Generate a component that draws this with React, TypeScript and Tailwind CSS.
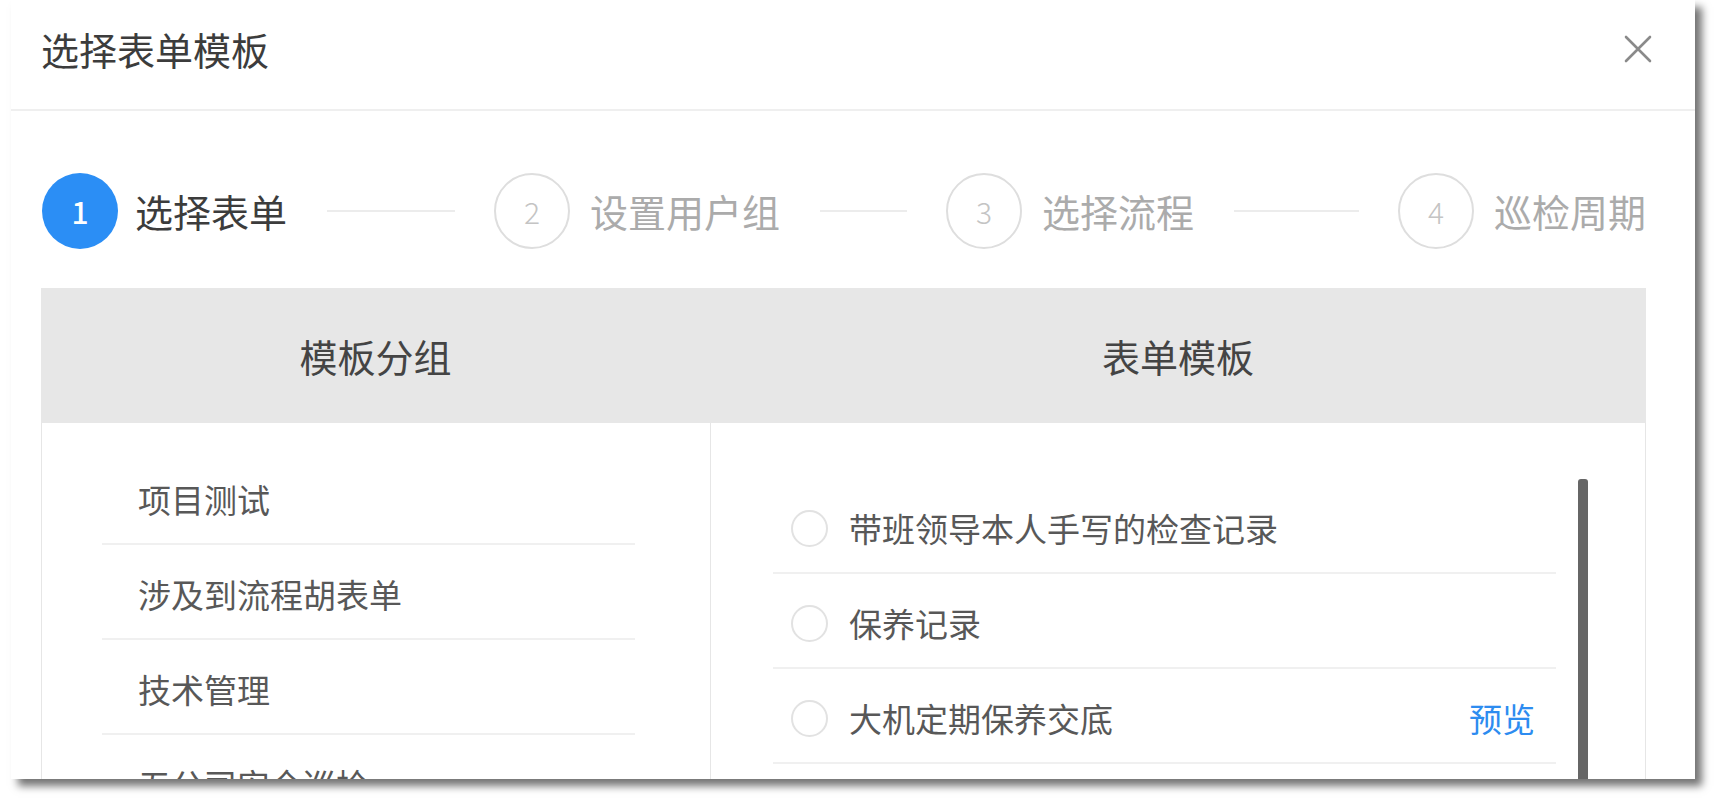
import React from "react";

const steps = [
  { n: "1", label: "选择表单", active: true },
  { n: "2", label: "设置用户组", active: false },
  { n: "3", label: "选择流程", active: false },
  { n: "4", label: "巡检周期", active: false },
];

const groups = ["项目测试", "涉及到流程胡表单", "技术管理", "五公司安全巡检"];
const forms = [
  { name: "带班领导本人手写的检查记录", preview: false },
  { name: "保养记录", preview: false },
  { name: "大机定期保养交底", preview: true },
];

export default function App() {
  return (
    <div className="w-[1721px] h-[808px] bg-white overflow-hidden font-['Noto_Sans_CJK_SC','Noto_Sans',sans-serif]">
      <div className="ml-[11px] w-[1684px] h-[779px] bg-white shadow-[7px_7px_8px_rgba(0,0,0,0.55)] overflow-hidden flex flex-col">
        {/* header */}
        <div className="h-[111px] shrink-0 border-b-2 border-[#efefef] flex items-center justify-between pl-[30px] pr-[42px] pb-[12px]">
          <div className="text-[38px] leading-none text-[#3c3c3c]">选择表单模板</div>
          <svg width="30" height="30" viewBox="0 0 30 30" className="shrink-0">
            <path d="M3 3 L27 27 M27 3 L3 27" stroke="#8a8a8a" strokeWidth="2.6" strokeLinecap="round" />
          </svg>
        </div>

        {/* steps */}
        <div className="mt-[62px] ml-[31px] w-[1604px] flex items-center shrink-0">
          {steps.map((s, i) => {
            const last = i === steps.length - 1;
            return (
              <div key={s.n} className={last ? "flex-none flex items-center" : "flex-1 flex items-center"}>
                {s.active ? (
                  <div className="w-[76px] h-[76px] rounded-full bg-[#2b8ef5] flex items-center justify-center text-white text-[30px] leading-none font-medium shrink-0">
                    {s.n}
                  </div>
                ) : (
                  <div className="w-[76px] h-[76px] rounded-full border-2 border-[#dedede] flex items-center justify-center text-[#c4c4c4] text-[30px] leading-none font-light shrink-0">
                    {s.n}
                  </div>
                )}
                <div
                  className={
                    s.active
                      ? "ml-[17px] text-[38px] leading-none text-[#3c3c3c] whitespace-nowrap"
                      : "ml-[20px] text-[38px] leading-none text-[#ababab] whitespace-nowrap"
                  }
                >
                  {s.label}
                </div>
                {!last && <div className="flex-1 h-[2px] bg-[#ececec] ml-[40px] mr-[39px]" />}
              </div>
            );
          })}
        </div>

        {/* table */}
        <div className="mt-[39px] ml-[30px] w-[1605px] flex-1 flex flex-col min-h-0">
          <div className="h-[135px] shrink-0 bg-[#e7e7e7] grid grid-cols-[669px_1fr] items-center text-[38px] leading-none text-[#444]">
            <div className="text-center">模板分组</div>
            <div className="text-center">表单模板</div>
          </div>
          <div className="flex-1 min-h-0 grid grid-cols-[669px_1fr] border-x border-[#e6e6e6]">
            <div className="border-r border-[#e6e6e6] pt-[27px] overflow-hidden">
              <div className="ml-[60px] w-[533px]">
                {groups.map((g) => (
                  <div
                    key={g}
                    className="h-[95px] border-b-2 border-[#f0f0f0] flex items-center pl-[36px] pt-[5px] text-[33px] leading-none text-[#585858]"
                  >
                    {g}
                  </div>
                ))}
              </div>
            </div>
            <div className="pt-[56px] flex overflow-hidden">
              <div className="ml-[62px] w-[783px]">
                {forms.map((f) => (
                  <div key={f.name} className="h-[95px] border-b-2 border-[#f0f0f0] flex items-center pt-[5px]">
                    <div className="ml-[18px] w-[37px] h-[37px] rounded-full border-2 border-[#e2e2e2] shrink-0" />
                    <div className="ml-[21px] text-[33px] leading-none text-[#585858] whitespace-nowrap">{f.name}</div>
                    {f.preview && (
                      <div className="ml-auto mr-[21px] text-[33px] leading-none text-[#2d8cf0]">预览</div>
                    )}
                  </div>
                ))}
              </div>
              <div className="ml-[22px] w-[10px] bg-[#666666] rounded-t-[3px] self-stretch" />
            </div>
          </div>
        </div>
      </div>
    </div>
  );
}
